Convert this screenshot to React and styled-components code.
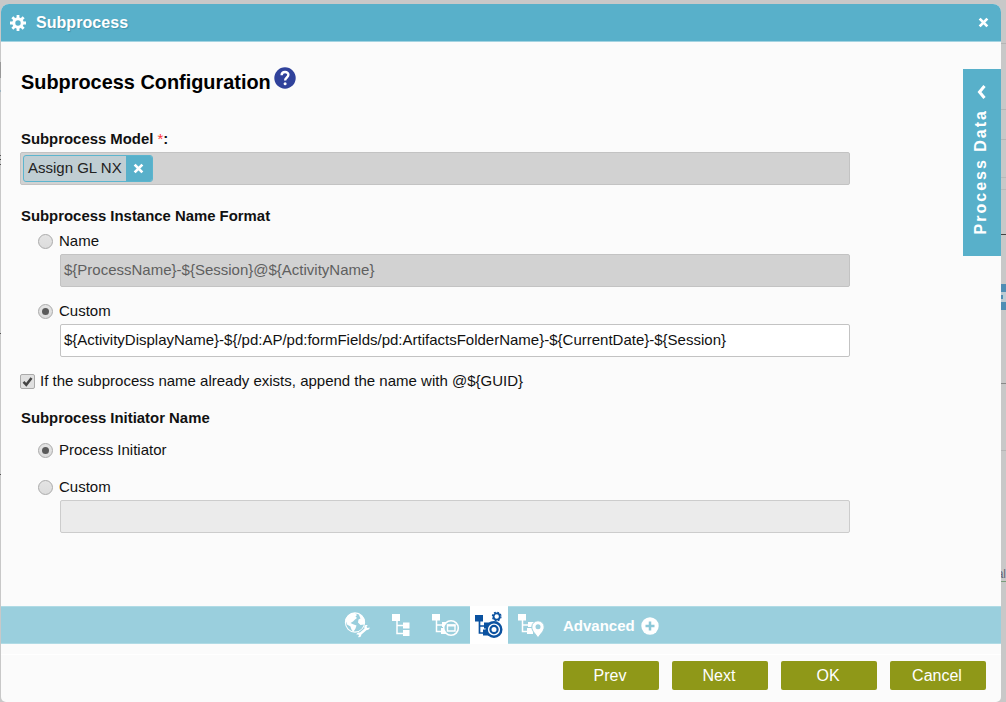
import React from 'react';
import styled, { createGlobalStyle } from 'styled-components';

const Global = createGlobalStyle`
  * { box-sizing: border-box; }
  body { margin: 0; background: #c8c8c8; overflow: hidden; font-family: "Liberation Sans", Arial, sans-serif; }
`;
const Page = styled.div`
  position: relative; width: 1006px; height: 702px; overflow: hidden;
  background: #c8c8c8; padding: 4px 5px 0 1px;
`;
const Mark = styled.div`
  position: absolute; left: ${p => p.$x}px; top: ${p => p.$y}px;
  width: ${p => p.$w}px; height: ${p => p.$h || 1}px; background: ${p => p.$c};
`;
const EdgeText = styled.div`
  position: absolute; right: 0; top: 567px;
  font-size: 12px; line-height: 14px; color: #667; white-space: nowrap;
`;
const Dialog = styled.section`
  position: relative; display: flex; flex-direction: column; width: 1000px; height: 698px;
  background: #fbfbfb; border-radius: 8px 8px 5px 5px; overflow: hidden;
`;
const Header = styled.header`
  display: flex; align-items: center; height: 38px; padding: 0 12px 0 9px;
  background: #58b0ca; border-bottom: 1px solid #a3d3e1; color: #fff; flex: none;
`;
const HeaderTitle = styled.h1`
  margin: 0 auto 0 10px; font-size: 16px; line-height: 20px; font-weight: bold; letter-spacing: 0.05px;
  text-shadow: 1px 1px 1px rgba(0, 60, 80, .25);
`;
const Body = styled.main`
  display: flex; flex-direction: column; height: 564px; padding: 28px 0 0 19px; flex: none;
`;
const Title = styled.h2`
  display: flex; margin: 0 0 35px; height: 24px; font-size: 19.9px; line-height: 24px; color: #000; padding-left: 1px; gap: 3px;
  svg { margin-top: -3px; }
`;
const Label = styled.div`
  height: 20px; line-height: 20px; font-size: 14.9px; font-weight: bold; color: #111; padding-left: 1px;
  margin-top: ${p => p.$top || 0}px; white-space: pre;
`;
const Star = styled.span`color: #f33; font-weight: normal;`;
const Field = styled.div`
  display: flex; align-items: center; height: 33px; width: ${p => p.$wide ? 830 : 790}px;
  margin-left: ${p => p.$wide ? 0 : 40}px; margin-top: ${p => p.$top || 0}px; padding: 0 0 ${p => p.$wide ? 1 : 2}px ${p => p.$wide ? 2 : 3}px;
  border: 1px solid ${p => p.$kind === 'empty' ? '#ccc' : '#c3c3c3'}; border-radius: 2px; font-size: 15px; white-space: nowrap;
  background: ${p => ({ empty: '#ebebeb', active: '#fff' }[p.$kind] || '#d2d2d2')};
  color: ${p => p.$kind === 'active' ? '#111' : '#5f5f5f'};
`;
const Tag = styled.span`
  display: flex; align-items: stretch; height: 27px; border: 1px solid #5cb5ce; border-radius: 3px;
  background: #c0ced3; color: #222; font-size: 15px; line-height: 24px; padding-left: 4px; overflow: hidden;
`;
const TagClose = styled.span`
  display: flex; align-items: center; justify-content: center; width: 26px; margin-left: 4px; background: #58b0ca;
`;
const Choice = styled.div`
  display: flex; align-items: center; height: 20px; line-height: 18px; margin-top: ${p => p.$top || 0}px;
  padding-left: ${p => p.$flush ? 0 : 18}px; gap: ${p => p.$flush ? 5 : 6}px; font-size: 15px; color: #111; white-space: nowrap;
`;
const Radio = styled.span`
  display: flex; align-items: center; justify-content: center; width: 15px; height: 15px; border-radius: 50%;
  border: 1px solid #aaa; background: linear-gradient(#e4e4e4, #dcdcdc);
  &::after { content: ""; width: 7px; height: 7px; border-radius: 50%; background: ${p => p.$on ? '#5a5a5a' : 'transparent'}; }
`;
const Check = styled.span`
  display: flex; width: 15px; height: 15px; border: 1px solid #aaa; border-radius: 2px; background: #e0e0e0;
`;
const SideTab = styled.aside`
  position: absolute; right: 0; top: 65px; width: 38px; height: 187px; background: #58b0ca; color: #fff;
  display: flex; flex-direction: column; align-items: center; padding: 16px 2px 0 0; gap: 10px;
`;
const SideText = styled.span`
  writing-mode: vertical-rl; transform: rotate(180deg); font-weight: bold; font-size: 16px; line-height: 18px;
  letter-spacing: 2px; white-space: nowrap;
`;
const Toolbar = styled.nav`
  display: flex; align-items: stretch; height: 38px; flex: none; background: #9acfdd; padding-left: 337px;
  border-top: 1px solid #b0dbe5; border-bottom: 1px solid #b0dbe5; color: #fff;
`;
const Tool = styled.span`
  display: flex; align-items: center; justify-content: center; width: ${p => p.$w}px; padding-right: ${p => p.$nudge || 0}px;
  margin: -1px 0; background: ${p => p.$active ? '#fff' : 'transparent'}; color: ${p => p.$active ? '#0b52a0' : '#fff'};
`;
const Advanced = styled.span`
  display: flex; align-items: center; gap: 6px; margin-left: 7px; font-size: 15px; font-weight: bold; padding-top: 1px;
`;
const Footer = styled.footer`
  display: flex; justify-content: flex-end; gap: 13px; height: 48px; margin-top: 10px; padding: 6px 15px 0 0;
  border-top: 1px solid #fff;
`;
const Button = styled.button`
  width: 96px; height: 29px; border: 0; border-radius: 2px; padding: 0 2px 0 0; background: #8f9818; color: #fff;
  font: 16px "Liberation Sans", Arial, sans-serif;
`;

const Cross = ({ size = 10 }) => (
  <svg width={size} height={size} viewBox="0 0 10 10"><path d="M1.5 1.5 8.5 8.5M8.5 1.5 1.5 8.5" stroke="#fff" strokeWidth="2.5" /></svg>
);
const Gear = () => (
  <svg width="16" height="16" viewBox="-8 -8 16 16" fill="none" stroke="#fff">
    <circle r="4.2" strokeWidth="3" />
    {[0, 45, 90, 135, 180, 225, 270, 315].map(a => <path key={a} d="M0-4.8V-8" strokeWidth="2.8" transform={`rotate(${a})`} />)}
  </svg>
);
const Help = () => (
  <svg width="22" height="22" viewBox="0 0 22 22">
    <circle cx="11" cy="11" r="10.7" fill="#30429b" />
    <path d="M7.6 8.2C7.7 4.1 14.4 4 14.4 7.8c0 2.7-3.3 2.7-3.3 5.7" fill="none" stroke="#fff" strokeWidth="2.4" />
    <circle cx="11.1" cy="16.7" r="1.5" fill="#fff" />
  </svg>
);
const Globe = () => (
  <svg width="26" height="26" viewBox="0 0 26 26">
    <circle cx="11" cy="10.5" r="9.6" fill="none" stroke="currentColor" strokeWidth="1.1" />
    <path d="M1.5 8C3 3 7 .8 11 1l2 2-1.5 1.5L13 6l-2 1.5L9 9.5 6.5 11l2 1 4 1.5-1 3-2 3.2C7 18 7 16 6.5 14.5L3 12.5zM14.5 1.8c3 1 5 3.2 6 6.2l-.5 4.5-3.5.5-2.5-2.5.5-3 2-1z" fill="currentColor" />
    <path d="m14 24 9-8" stroke="#9acfdd" strokeWidth="5" />
    <path d="m15.5 22.5 7-6" stroke="currentColor" strokeWidth="2.4" />
    <path d="M21.5 13c-2 1.5-1.5 5 1.5 5 1.6 0 2.6-1 2.8-2.4l-2.5.4-.8-1.3 1.2-1.7zM16.8 24.5c1.5-2-.5-4.8-3-3.7-.8.4-1.3 1-1.4 1.8l2-.2.6 1.1-1 1.5c1 .4 2 .3 2.8-.5z" fill="currentColor" />
  </svg>
);
const Tree = () => (
  <svg width="20" height="24" viewBox="0 0 20 24">
    <path d="M1 1h8v7H1zM12 9.5h6.5v6H12zM12 17h6.5v6H12z" fill="currentColor" />
    <path d="M6 7v13.5h7M6 12.5h7" stroke="currentColor" strokeWidth="1.5" fill="none" />
  </svg>
);
const TreeSmall = ({ children }) => (
  <svg width="30" height="27" viewBox="0 0 30 27">
    <path d="M1 2h8v6.5H1zM11 10h6v5h-6zM10 16h6v6h-6z" fill="currentColor" />
    <path d="M5.5 8v11.5h6M5.5 13h6" stroke="currentColor" strokeWidth="1.5" fill="none" />
    {children}
  </svg>
);
const GearTool = () => (
  <svg width="30" height="29" viewBox="0 0 30 29">
    <path d="M1 4h8v6.5H1zM10 11.5h7v6h-7zM9 18.5h7v6H9z" fill="currentColor" />
    <path d="M5.5 9v13h6M5.5 15h6" stroke="currentColor" strokeWidth="1.7" fill="none" />
    <circle cx="22.7" cy="5.5" r="3.1" fill="none" stroke="currentColor" strokeWidth="1.8" />
    <circle cx="22.7" cy="5.5" r="4.3" fill="none" stroke="currentColor" strokeWidth="1.2" strokeDasharray="1.9 1.48" />
    <circle cx="20" cy="18.5" r="7.3" fill="#fff" stroke="currentColor" strokeWidth="2.4" />
    <circle cx="20" cy="18.5" r="3.6" fill="none" stroke="currentColor" strokeWidth="2.2" />
  </svg>
);

export default function App() {
  return (
    <Page>
      <Global />
      <Mark $x={0} $y={62} $w={1} $h={16} $c="#999" />
      <Mark $x={0} $y={90} $w={1} $h={2} $c="#9db3c0" />
      <Mark $x={0} $y={155} $w={1} $c="#555" />
      <Mark $x={0} $y={159} $w={1} $c="#444" />
      <Mark $x={0} $y={164} $w={1} $c="#555" />
      <Mark $x={0} $y={333} $w={1} $c="#555" />
      <Mark $x={0} $y={474} $w={1} $c="#555" />
      <Mark $x={1001} $y={43} $w={5} $c="#b5b5b5" />
      <Mark $x={1001} $y={109} $w={5} $c="#b5b5b5" />
      <Mark $x={1001} $y={139} $w={5} $c="#b5b5b5" />
      <Mark $x={1001} $y={177} $w={5} $c="#b9b9b9" />
      <Mark $x={1001} $y={189} $w={5} $c="#b9b9b9" />
      <Mark $x={1001} $y={234} $w={5} $c="#444" />
      <Mark $x={1001} $y={284} $w={5} $h={26} $c="#4f8db4" />
      <Mark $x={1001} $y={292} $w={5} $h={10} $c="#bccbd3" />
      <Mark $x={1001} $y={295} $w={2} $h={4} $c="#4f8db4" />
      <Mark $x={1001} $y={383} $w={5} $c="#888" />
      <Mark $x={1001} $y={450} $w={5} $c="#b5b5b5" />
      <EdgeText>al</EdgeText>
      <Mark $x={1001} $y={581} $w={5} $c="#7a9c7a" />
      <Dialog>
        <Header>
          <Gear />
          <HeaderTitle>Subprocess</HeaderTitle>
          <Cross size={11} />
        </Header>
        <Body>
          <Title>Subprocess Configuration<Help /></Title>
          <Label>Subprocess Model <Star>*</Star>:</Label>
          <Field $wide $top={3}>
            <Tag>Assign GL NX<TagClose><Cross size={11} /></TagClose></Tag>
          </Field>
          <Label $top={21}>Subprocess Instance Name Format</Label>
          <Choice $top={5}><Radio /><span>Name</span></Choice>
          <Field $top={3}>{'${ProcessName}-${Session}@${ActivityName}'}</Field>
          <Choice $top={14}><Radio $on /><span>Custom</span></Choice>
          <Field $top={3} $kind="active">{'${ActivityDisplayName}-${/pd:AP/pd:formFields/pd:ArtifactsFolderName}-${CurrentDate}-${Session}'}</Field>
          <Choice $top={14} $flush>
            <Check><svg width="13" height="13" viewBox="0 0 13 13"><path d="m2.5 6.8 2.8 3L10.5 3" fill="none" stroke="#444" strokeWidth="2.5" /></svg></Check>
            <span>{'If the subprocess name already exists, append the name with @${GUID}'}</span>
          </Choice>
          <Label $top={17}>Subprocess Initiator Name</Label>
          <Choice $top={12}><Radio $on /><span>Process Initiator</span></Choice>
          <Choice $top={17}><Radio /><span>Custom</span></Choice>
          <Field $top={3} $kind="empty" />
        </Body>
        <Toolbar>
          <Tool $w={38}><Globe /></Tool>
          <Tool $w={50}><Tree /></Tool>
          <Tool $w={44} $nudge={5}>
            <TreeSmall>
              <circle cx="20" cy="16" r="7.3" fill="#9acfdd" stroke="currentColor" strokeWidth="1.6" />
              <path d="M16.5 13h7.5v6h-7.5z" fill="none" stroke="currentColor" strokeWidth="1.4" /><path d="M16 13.5h8.5" stroke="currentColor" strokeWidth="2" />
            </TreeSmall>
          </Tool>
          <Tool $w={38} $active><GearTool /></Tool>
          <Tool $w={48}>
            <TreeSmall>
              <path d="M21 26c-2-4-6.2-6.5-6.2-11a6.2 6.2 0 0 1 12.4 0c0 4.5-4.2 7-6.2 11z" fill="currentColor" stroke="#9acfdd" />
              <circle cx="21" cy="14.8" r="2.5" fill="#9acfdd" />
            </TreeSmall>
          </Tool>
          <Advanced>Advanced
            <svg width="18" height="18" viewBox="0 0 18 18"><circle cx="9" cy="9" r="8.7" fill="#fff" /><path d="M9 4.5v9M4.5 9h9" stroke="#8cc8d8" strokeWidth="2.5" /></svg>
          </Advanced>
        </Toolbar>
        <Footer>
          <Button>Prev</Button><Button>Next</Button><Button>OK</Button><Button>Cancel</Button>
        </Footer>
        <SideTab>
          <svg width="10" height="14" viewBox="0 0 10 14"><path d="M8.5 1 3.5 7l5 6" fill="none" stroke="#fff" strokeWidth="3" /></svg>
          <SideText>Process Data</SideText>
        </SideTab>
      </Dialog>
    </Page>
  );
}
